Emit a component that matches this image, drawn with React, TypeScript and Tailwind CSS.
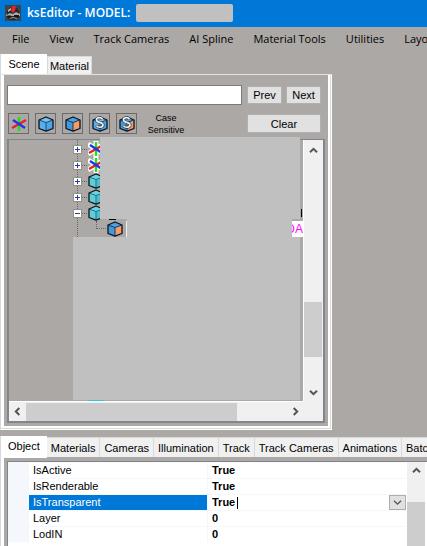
import React, { useState } from "react";

const menuItems = ["File", "View", "Track Cameras", "AI Spline", "Material Tools", "Utilities", "Layout"];

const objectTabs = [
  "Object",
  "Materials",
  "Cameras",
  "Illumination",
  "Track",
  "Track Cameras",
  "Animations",
  "Batch",
];

const properties = [
  { name: "IsActive", value: "True" },
  { name: "IsRenderable", value: "True" },
  { name: "IsTransparent", value: "True" },
  { name: "Layer", value: "0" },
  { name: "LodIN", value: "0" },
];

const AxisIcon = ({ outlined = false }: { outlined?: boolean }) => (
  <svg width="16" height="16" viewBox="0 0 16 16" fill="none" className="shrink-0">
    {outlined && (
      <path d="M8 0v16M0 3l16 10M0 13l16-10" stroke="#fff" strokeWidth="5" />
    )}
    <path d="M8 1v14" stroke="#1be01b" strokeWidth="2.4" />
    <path d="M1 12l14-8" stroke="#e8202c" strokeWidth="2.4" />
    <path d="M2 4l12 8" stroke="#2234ea" strokeWidth="2.4" />
  </svg>
);

type CubeProps = { front: string; side: string; top: string; edge: string; letter?: boolean };

const CubeIcon = ({ front, side, top, edge, letter }: CubeProps) => (
  <svg width="16" height="16" viewBox="0 0 16 16" strokeLinejoin="round" className="shrink-0">
    <path d="M1 4l7 2v9.2L1 12.500z" fill={front} />
    <path d="M8 6l7-2v8.500l-7 2.700z" fill={side} />
    <path d="M1 4l7-3 7 3-7 2.300z" fill={top} />
    <path d="M1.500 4.200L8 6.500l6.500-2.300M8 6.500V15" stroke={edge} strokeWidth="1" fill="none" />
    <path d="M1 4l7-3 7 3v8.500l-7 2.700-7-2.700z" stroke="#0a1420" strokeWidth="1.300" fill="none" />
    {letter && (
      <>
        <path d="M10.500 3.200C9 .8 4.200 1.300 4.500 4.200c.3 2.800 6.300 1.600 6.500 4.600.2 2.800-5 3.400-6.500.8" stroke="#26323c" strokeWidth="3" fill="none" />
        <path d="M10.500 3.200C9 .8 4.200 1.300 4.500 4.200c.3 2.800 6.300 1.600 6.500 4.600.2 2.800-5 3.400-6.500.8" stroke="#eee" strokeWidth="1.700" fill="none" />
      </>
    )}
  </svg>
);

const blue = { front: "#5aaee8", side: "#4fa3e0", top: "#79c2f2", edge: "#12507f" };
const orange = { front: "#4598d8", side: "#f79a6c", top: "#4ba3e4", edge: "#14385a" };
const teal = { front: "#62cdd2", side: "#50bdc6", top: "#6ad6da", edge: "#1c6fa8" };

const Chevron = ({ className = "", thin = false }: { className?: string; thin?: boolean }) => (
  <svg width="9" height="9" viewBox="0 0 9 9" fill="none" className={className}>
    <path d="M1 6.300l3.500-3.500L8 6.300" stroke="#555" strokeWidth={thin ? 1.3 : 2} />
  </svg>
);

const AppIcon = () => (
  <svg width="16" height="16" viewBox="0 0 16 16">
    <rect width="16" height="16" fill="#3f4448" />
    <path d="M2 6l4-4 6 1 2 4v5l-4 3H5l-3-3z" fill="#24272a" />
    <path d="M1 10l4-2 3 1 3-2 4 2v2H1z" fill="#a9a9ab" />
    <path d="M2 10.500h4v2H2zM9 10h5v2.500H9z" fill="#15171a" />
    <path d="M3 5l3-2v2L3 7z" fill="#b9bcbe" />
    <path d="M7 1h4L10 6l-2 2-2-2z" fill="#e3262e" />
    <path d="M5 13.500l3-1 4 1" stroke="#9a9a9c" fill="none" />
  </svg>
);

const TreeRow = ({ open = false, children }: { open?: boolean; children: React.ReactNode }) => (
  <li className="flex h-4 items-center">
    <span className="z-10 flex h-[9px] w-[9px] shrink-0 items-center justify-center border border-[#919191] bg-white">
      <svg width="5" height="5" viewBox="0 0 5 5">
        <path d={open ? "M0 2.500h5" : "M0 2.500h5M2.500 0v5"} stroke="#2b3d8c" />
      </svg>
    </span>
    <span className="mr-px w-[5px] border-t border-dotted border-[#666]" />
    {children}
  </li>
);

const App = () => {
  const [sceneTab, setSceneTab] = useState<"Scene" | "Material">("Scene");
  const [activeTab, setActiveTab] = useState("Object");
  const [search, setSearch] = useState("");

  const toolButtons = [
    { label: "Nodes", icon: <AxisIcon /> },
    { label: "Meshes", icon: <CubeIcon {...blue} /> },
    { label: "Materials", icon: <CubeIcon {...orange} /> },
    { label: "Search meshes", icon: <CubeIcon {...blue} letter /> },
    { label: "Search materials", icon: <CubeIcon {...orange} letter /> },
  ];

  return (
    <div className="flex h-screen flex-col overflow-hidden bg-[#aca8a5] font-['Liberation_Sans',sans-serif] text-[11px] leading-4 text-black">
      {/* title bar */}
      <header className="flex h-[27px] shrink-0 items-center bg-[#0078d7] pb-[2px] pl-[5px]">
        <AppIcon />
        <h1 className="ml-[6px] whitespace-nowrap font-['Open_Sans',sans-serif] text-[12px] font-semibold text-white">
          ksEditor - MODEL:
        </h1>
        <span className="ml-[6px] h-[18px] w-[97px] rounded-[2px] bg-[#c0c0c0]" />
      </header>

      {/* menu */}
      <nav className="flex h-[27px] shrink-0 items-center gap-5 overflow-hidden whitespace-nowrap pb-1 pl-3 font-['Open_Sans',sans-serif] text-[11px]">
        {menuItems.map((item) => (
          <button key={item} className="shrink-0">
            {item}
          </button>
        ))}
      </nav>

      {/* scene panel */}
      <section className="shrink-0 pr-[95px]">
        <div className="flex h-5 items-end" role="tablist">
          {(["Scene", "Material"] as const).map((tab) => (
            <button
              key={tab}
              role="tab"
              aria-selected={sceneTab === tab}
              onClick={() => setSceneTab(tab)}
              className={
                sceneTab === tab
                  ? "h-5 w-[47px] border-l border-[#d9d9d9] bg-white"
                  : "h-[18px] w-[45px] border border-b-0 border-[#d9d9d9] bg-[#f0f0f0]"
              }
            >
              {tab}
            </button>
          ))}
        </div>
        <div className="border border-r-white border-b-white border-l-[#d5d9de] border-t-[#e3e3e3]">
          <div className="border-b border-r border-[#d9d9d9]">
            <div className="border-b-2 border-l-[3px] border-r-2 border-white px-[3px] pb-[3px] pt-[10px]">
              <div className="flex items-center gap-1 pr-1">
                <input
                  aria-label="Search nodes"
                  value={search}
                  onChange={(e) => setSearch(e.target.value)}
                  className="mr-px h-5 min-w-0 flex-1 border border-[#7a7a7a] bg-white px-1 outline-none"
                />
                <button className="h-[18px] w-[35px] border border-[#b0b0b0] bg-[#e1e1e1] leading-4">Prev</button>
                <button className="h-[18px] w-[35px] border border-[#b0b0b0] bg-[#e1e1e1] leading-4">Next</button>
              </div>

              <div className="mt-2 flex h-[21px] items-center pl-px pr-1">
                <div className="flex gap-[6px]">
                  {toolButtons.map(({ label, icon }) => (
                    <button
                      key={label}
                      aria-label={label}
                      className="flex h-[21px] w-[21px] items-center justify-center border border-[#6b6b6b]"
                    >
                      {icon}
                    </button>
                  ))}
                </div>
                <span className="flex-1 pr-[52px] text-center text-[9px] leading-3">
                  Case
                  <br />
                  Sensitive
                </span>
                <button className="h-[19px] w-[74px] border border-[#b0b0b0] bg-[#e1e1e1] leading-4">Clear</button>
              </div>

              {/* node tree */}
              <div className="relative mt-[5px] h-[284px] border-2 border-t border-[#82858c]">
                <div className="flex h-full flex-col">
                  <div className="flex min-h-0 flex-1">
                    <div className="relative min-w-0 flex-1 overflow-hidden border-b border-white">
                      <span className="absolute left-[68px] top-0 h-[97px] border-l border-dotted border-[#666]" />
                      <ul className="pl-16 pt-px">
                        <TreeRow><AxisIcon outlined /></TreeRow>
                        <TreeRow><AxisIcon outlined /></TreeRow>
                        <TreeRow><CubeIcon {...teal} /></TreeRow>
                        <TreeRow><CubeIcon {...teal} /></TreeRow>
                        <TreeRow open><CubeIcon {...teal} /></TreeRow>
                        <li className="flex h-4 items-center pl-[23px]">
                          <span className="mb-2 mr-px h-2 w-[10px] border-b border-l border-dotted border-[#666]" />
                          <CubeIcon {...orange} />
                          <span className="ml-[3px] h-4 w-px bg-[#eee]" />
                          <span className="ml-auto flex h-4 w-[11px] justify-end overflow-hidden whitespace-nowrap bg-white text-[12px] text-[#f0f]">
                            DA
                          </span>
                        </li>
                      </ul>
                      <span className="absolute left-[100px] top-[79px] h-px w-[7px] bg-black" />
                      <span className="absolute bottom-0 left-[79px] h-px w-4 bg-[#35c3d6]" />
                      <span className="absolute right-px top-[69px] h-2 w-px bg-black" />
                    </div>
                    <div className="flex w-5 flex-col items-center border-l border-white bg-[#f0f0f0] pb-[5px] pt-[6px]">
                      <button aria-label="Scroll up"><Chevron /></button>
                      <div className="flex w-full flex-1 flex-col justify-end pb-[31px]">
                        <div className="h-[55px] w-[18px] bg-[#cdcdcd]" />
                      </div>
                      <button aria-label="Scroll down"><Chevron className="rotate-180" /></button>
                    </div>
                  </div>
                  <div className="flex h-[19px] items-center bg-[#f0f0f0] pl-1 pr-[23px]">
                    <button aria-label="Scroll left"><Chevron className="-rotate-90" /></button>
                    <div className="ml-1 mr-[54px] h-[18px] flex-1 bg-[#cdcdcd]" />
                    <button aria-label="Scroll right"><Chevron className="rotate-90" /></button>
                  </div>
                </div>
                <div className="absolute -top-[3px] left-[91px] right-[23px] z-20 h-[82px] bg-[#c0c0c0]" />
                <div className="absolute left-[118px] right-[31px] top-[79px] z-20 h-[18px] bg-[#c0c0c0]" />
                <div className="absolute left-16 right-[23px] top-[97px] z-20 h-[163px] bg-[#c0c0c0]" />
              </div>
            </div>
          </div>
        </div>
      </section>

      {/* object panel */}
      <section className="flex min-h-0 flex-1 flex-col pt-[6px]">
        <div className="flex h-[22px] shrink-0 items-end overflow-hidden whitespace-nowrap" role="tablist">
          {objectTabs.map((tab) => (
            <button
              key={tab}
              role="tab"
              aria-selected={activeTab === tab}
              onClick={() => setActiveTab(tab)}
              className={
                activeTab === tab
                  ? "h-[22px] shrink-0 border-l border-[#d9d9d9] bg-white px-[7px] pb-[2px]"
                  : "mb-px h-5 shrink-0 border-r border-t border-[#d9d9d9] bg-[#f0f0f0] px-1"
              }
            >
              {tab}
            </button>
          ))}
        </div>
        <div className="min-h-0 flex-1 border-l border-[#d5d9de]">
          <div className="h-full border-l-[3px] border-white pl-[3px] pt-[3px]">
            <div className="flex h-full border-l border-t border-[#82858c] bg-white">
              <table className="h-fit flex-1 border-separate border-spacing-0">
                <tbody>
                  {properties.map(({ name, value }) => {
                    const selected = name === "IsTransparent";
                    return (
                      <tr key={name} className="h-4">
                        <td className="w-[21px] bg-[#f4f7fc] p-0" />
                        <th
                          scope="row"
                          className={
                            selected
                              ? "w-[178px] border-t border-[#f4f7fc] bg-[#0078d7] bg-clip-padding p-0 pl-1 text-left font-normal leading-[15px] text-white"
                              : "w-[178px] border-t border-[#f4f7fc] p-0 pl-1 text-left font-normal leading-[15px]"
                          }
                        >
                          {name}
                        </th>
                        <td className="border-l border-t border-[#f4f7fc] p-0 pl-1 font-bold leading-[15px]">
                          {selected ? (
                            <div className="flex h-[15px] items-center">
                              <input
                                aria-label={name}
                                defaultValue={value}
                                className="h-[15px] w-[25px] p-0 font-bold outline-none"
                              />
                              <span className="h-3 w-px bg-black" />
                              <button
                                aria-label="Open value list"
                                className="ml-auto flex h-[15px] w-[17px] items-center justify-center border border-[#adadad] bg-[#e1e1e1]"
                              >
                                <Chevron thin className="rotate-180" />
                              </button>
                            </div>
                          ) : (
                            value
                          )}
                        </td>
                      </tr>
                    );
                  })}
                </tbody>
              </table>
              <div className="mr-[2px] flex w-[19px] flex-col items-center border-l border-white bg-[#f0f0f0] pt-1">
                <button aria-label="Scroll properties up"><Chevron /></button>
                <div className="mt-auto h-[44px] w-[18px] bg-[#cdcdcd]" />
              </div>
            </div>
          </div>
        </div>
      </section>
    </div>
  );
};

export default App;
